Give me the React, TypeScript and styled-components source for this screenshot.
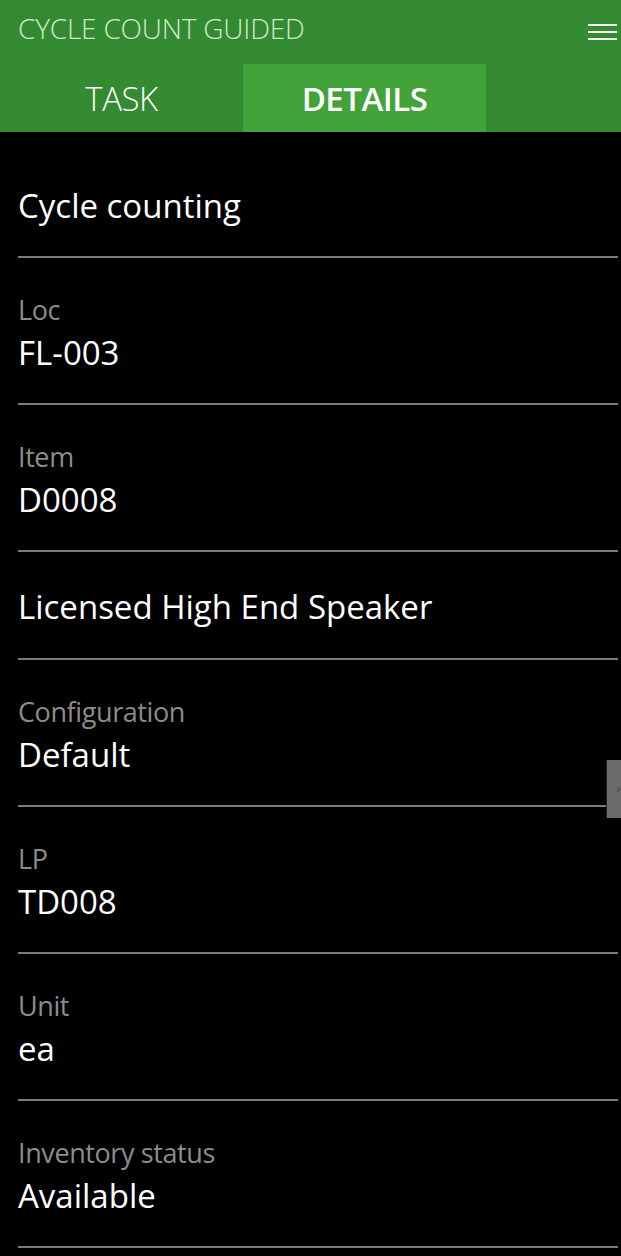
import styled, { createGlobalStyle } from "styled-components";

const GlobalStyle = createGlobalStyle`
  html, body {
    margin: 0;
    padding: 0;
    background: #000;
  }
  body {
    font-family: "Open Sans", "Noto Sans", sans-serif;
    color: #fff;
  }
`;

const rows: { label?: string; value: string }[] = [
  { value: "Cycle counting" },
  { label: "Loc", value: "FL-003" },
  { label: "Item", value: "D0008" },
  { value: "Licensed High End Speaker" },
  { label: "Configuration", value: "Default" },
  { label: "LP", value: "TD008" },
  { label: "Unit", value: "ea" },
  { label: "Inventory status", value: "Available" },
];

const App = () => {
  return (
    <Page>
      <GlobalStyle />
      <Header>
        <TitleBar>
          <Title>CYCLE COUNT GUIDED</Title>
          <Menu aria-label="menu">
            <span />
            <span />
            <span />
          </Menu>
        </TitleBar>
        <Tabs>
          <Tab>TASK</Tab>
          <Tab $active>DETAILS</Tab>
        </Tabs>
      </Header>
      <List>
        {rows.map((r, i) => (
          <Row key={i} $first={i === 0} $single={!r.label}>
            {r.label && <Label>{r.label}</Label>}
            <Value>{r.value}</Value>
          </Row>
        ))}
      </List>
      <SideTab>
        <svg width="10" height="20" viewBox="0 0 10 20">
          <path d="M1 5 L7 11 L1 17" fill="none" stroke="#1a1a1a" strokeWidth="1.6" />
        </svg>
      </SideTab>
    </Page>
  );
};

export default App;

const Page = styled.div`
  position: relative;
  width: 621px;
  min-height: 1256px;
  background: #000;
  overflow: hidden;
`;

const Header = styled.div`
  background: #338a30;
  height: 132px;
  display: flex;
  flex-direction: column;
`;

const TitleBar = styled.div`
  height: 64px;
  display: flex;
  align-items: center;
  justify-content: space-between;
  padding: 0 4px 8px 18px;
  box-sizing: border-box;
`;

const Title = styled.div`
  font-size: 28px;
  font-weight: 300;
  color: #d2e8cf;
  letter-spacing: -0.2px;
`;

const Menu = styled.div`
  width: 29px;
  display: flex;
  flex-direction: column;
  gap: 5px;
  margin-top: 8px;
  span {
    display: block;
    height: 2px;
    background: #fff;
  }
`;

const Tabs = styled.div`
  display: flex;
  height: 68px;
`;

const Tab = styled.div<{ $active?: boolean }>`
  width: 243px;
  display: flex;
  align-items: center;
  justify-content: center;
  font-size: 33px;
  letter-spacing: -0.5px;
  color: #fff;
  font-weight: ${(p) => (p.$active ? 600 : 300)};
  background: ${(p) => (p.$active ? "#42a33a" : "transparent")};
`;

const List = styled.div`
  display: flex;
  flex-direction: column;
  padding: 0 3px 0 18px;
`;

const Row = styled.div<{ $first?: boolean; $single?: boolean }>`
  border-bottom: 2px solid #7b7b7b;
  display: flex;
  flex-direction: column;
  justify-content: center;
  height: ${(p) => (p.$first ? 126 : p.$single ? 108 : 147)}px;
  box-sizing: border-box;
  padding-top: ${(p) => (p.$first ? 24 : 4)}px;
`;

const Label = styled.div`
  font-size: 27px;
  color: #8c8c8c;
  line-height: 40px;
  letter-spacing: -0.4px;
`;

const Value = styled.div`
  font-size: 33px;
  color: #fff;
  line-height: 46px;
  letter-spacing: 0;
`;

const SideTab = styled.div`
  position: absolute;
  left: 606px;
  top: 760px;
  width: 15px;
  height: 58px;
  background: #6b6b6b;
  border-left: 1px solid #222;
  display: flex;
  align-items: center;
  padding-left: 10px;
  box-sizing: border-box;
  overflow: hidden;
`;
